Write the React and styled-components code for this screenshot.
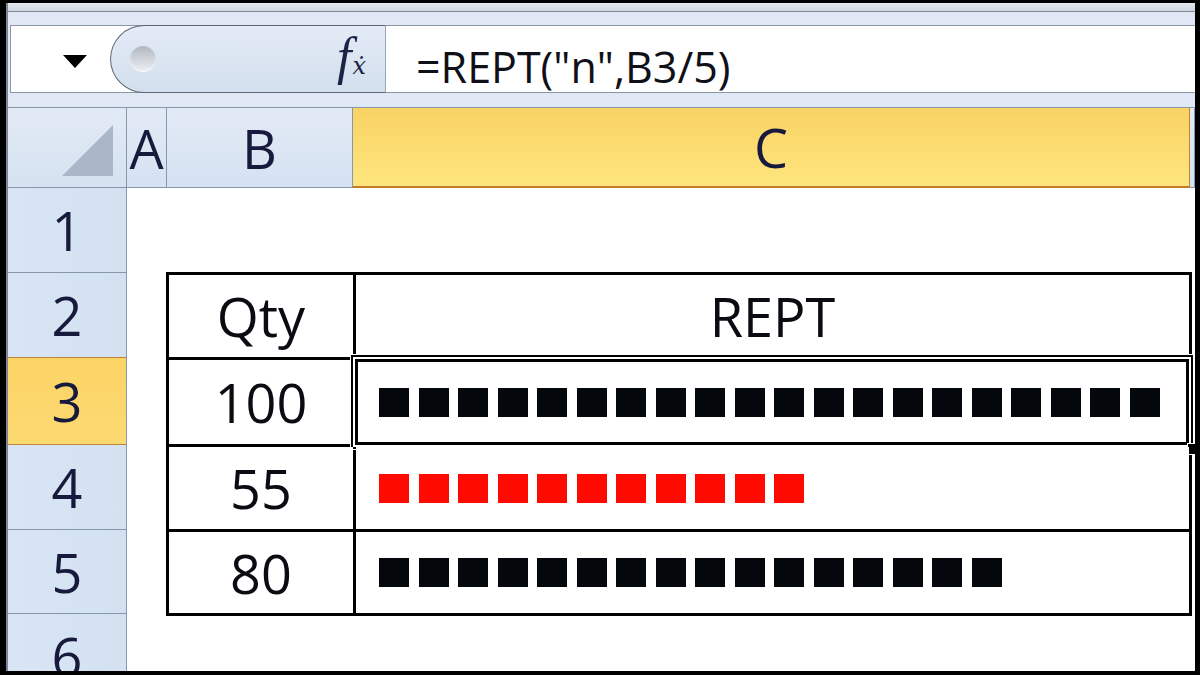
import React from 'react';
import styled, { createGlobalStyle } from 'styled-components';

const GlobalStyle = createGlobalStyle`
  html, body {
    margin: 0;
    background: #000;
  }
  body {
    font-family: "Open Sans", "Liberation Sans", sans-serif;
  }
`;

const Frame = styled.div`
  width: 1200px;
  height: 675px;
  box-sizing: border-box;
  padding: 3px 5px 4px 6px;
  background: #000;
`;

const Screen = styled.div`
  height: 100%;
  display: flex;
  flex-direction: column;
  background: #dfe8f4;
  border-left: 2px solid #7d8796;
  overflow: hidden;
`;

const TopStrip = styled.div`
  flex-shrink: 0;
  height: 8px;
  background: linear-gradient(#e6eaf0, #cfd6df);
  border-bottom: 1px solid #7c8795;
`;

const FormulaRow = styled.div`
  flex-shrink: 0;
  display: flex;
  height: 66px;
  margin: 13px 0 14px 2px;
  background: #fff;
  border-top: 1px solid #8c96a4;
  border-bottom: 1px solid #8c96a4;
  border-left: 1px solid #8c96a4;
`;

const NameBox = styled.div`
  width: 99px;
  flex-shrink: 0;
  display: flex;
  align-items: center;
  padding-left: 52px;
  box-sizing: border-box;
`;

const DropArrow = styled.span`
  width: 0;
  height: 0;
  margin-top: 5px;
  border-left: 12px solid transparent;
  border-right: 12px solid transparent;
  border-top: 13px solid #000;
`;

const FxPanel = styled.div`
  width: 276px;
  flex-shrink: 0;
  box-sizing: border-box;
  margin: -1px 0;
  display: flex;
  align-items: center;
  justify-content: space-between;
  padding: 0 19px 0 19px;
  background: linear-gradient(#e3ebf6, #d3dfee);
  border: 1px solid #5f6773;
  border-right-color: #9aa6b6;
  border-radius: 34px 0 0 34px;
`;

const Knob = styled.span`
  width: 26px;
  height: 26px;
  border-radius: 50%;
  background: linear-gradient(#b1b6bf, #eef1f5);
  box-shadow: inset 0 -1px 2px rgba(255, 255, 255, 0.7);
`;

const FxLabel = styled.span`
  display: flex;
  align-items: baseline;
  color: #1b2444;
  font-style: italic;
  line-height: 1;
  margin-top: -4px;
`;

const FxF = styled.span`
  font-family: "Liberation Serif", "DejaVu Serif", serif;
  font-size: 52px;
`;

const FxX = styled.span`
  font-family: "DejaVu Serif", serif;
  font-size: 24px;
  margin-left: 1px;
`;

const FormulaInput = styled.div`
  flex: 1;
  display: flex;
  align-items: center;
  padding: 14px 0 0 30px;
  box-sizing: border-box;
  font-size: 43px;
  color: #101018;
  white-space: nowrap;
`;

const Sheet = styled.div`
  flex: 1;
  min-height: 0;
  overflow: hidden;
  background: #fff;
  display: grid;
  grid-template-columns: 119px 40px 186px 837px 1fr;
  grid-template-rows: 81px 85px 85px 87px 85px 84px 85px;
`;

const HeaderBase = styled.div`
  box-sizing: border-box;
  display: flex;
  align-items: center;
  justify-content: center;
  font-size: 54px;
  color: #171a3c;
  line-height: 1;
`;

const Corner = styled(HeaderBase)`
  grid-column: 1;
  grid-row: 1;
  align-items: flex-end;
  justify-content: flex-end;
  padding: 0 13px 11px 0;
  background: linear-gradient(#e2eaf5, #d6e2f1);
  border-top: 1px solid #8798ad;
  border-right: 1px solid #8798ad;
  border-bottom: 1px solid #8798ad;
`;

const ColHeader = styled(HeaderBase)`
  grid-row: 1;
  grid-column: ${p => p.$col};
  overflow: visible;
  border-top: 1px solid #8798ad;
  border-right: 1px solid ${p => (p.$active ? '#c0843a' : '#8798ad')};
  border-bottom: ${p => (p.$active ? '2px solid #c47c2c' : '1px solid #8798ad')};
  background: ${p =>
    p.$active
      ? 'linear-gradient(#f9d264, #fee67e)'
      : 'linear-gradient(#e2eaf5, #d5e2f2)'};
`;

const RowHeader = styled(HeaderBase)`
  grid-column: 1;
  grid-row: ${p => p.$row};
  border-right: 1px solid #8798ad;
  border-bottom: 1px solid ${p => (p.$active ? '#c0843a' : '#8798ad')};
  border-top: ${p => (p.$active ? '1px solid #c0843a' : 'none')};
  margin-top: ${p => (p.$active ? '-1px' : '0')};
  background: ${p =>
    p.$active
      ? 'linear-gradient(#fbd465, #fdd972)'
      : 'linear-gradient(90deg, #d9e5f4, #d3e1f1)'};
`;

const DataTable = styled.div`
  grid-column: 3 / 5;
  grid-row: 3 / 7;
  align-self: start;
  margin: -1px -2px 0 -1px;
  display: grid;
  grid-template-columns: 184px 1fr;
  grid-template-rows: 82px 84px 82px 81px;
  gap: 3px;
  padding: 3px;
  background: #000;
  position: relative;
  z-index: 1;
`;

const Cell = styled.div`
  position: relative;
  background: #fff;
  display: flex;
  align-items: center;
  justify-content: ${p => (p.$bars ? 'flex-start' : 'center')};
  padding-left: ${p => (p.$bars ? '23px' : '0')};
  font-size: 54px;
  line-height: 1;
  color: #0b0b12;
`;

const Bars = styled.div`
  display: flex;
  gap: 9.5px;
`;

const Square = styled.span`
  width: 30px;
  height: 29px;
  background: ${p => p.$color};
`;

const Selection = styled.div`
  position: absolute;
  top: -5px;
  left: -5px;
  right: -4px;
  bottom: -5px;
  border: 2px solid #000;
  box-shadow: 0 0 0 1px #fff, inset 0 0 0 2px #fff, inset 0 0 0 5px #000;
  pointer-events: none;
`;

const FillHandle = styled.span`
  position: absolute;
  right: -8px;
  bottom: -8px;
  width: 10px;
  height: 10px;
  background: #000;
  border: 1px solid #fff;
`;

const columns = [
  { label: 'A', col: 2 },
  { label: 'B', col: 3 },
  { label: 'C', col: 4, active: true },
  { label: '', col: 5 },
];

const data = [
  { qty: 100, color: '#04080d', selected: true },
  { qty: 55, color: '#ff0a00' },
  { qty: 80, color: '#04080d' },
];

const App = () => {
  return (
    <Frame>
      <GlobalStyle />
      <Screen>
        <TopStrip />
        <FormulaRow>
          <NameBox>
            <DropArrow />
          </NameBox>
          <FxPanel>
            <Knob />
            <FxLabel>
              <FxF>f</FxF>
              <FxX>ẋ</FxX>
            </FxLabel>
          </FxPanel>
          <FormulaInput>=REPT("n",B3/5)</FormulaInput>
        </FormulaRow>
        <Sheet>
          <Corner>
            <svg width="51" height="51" viewBox="0 0 51 51">
              <polygon points="51,0 51,51 0,51" fill="#aab7c9" />
            </svg>
          </Corner>
          {columns.map(c => (
            <ColHeader key={c.col} $col={c.col} $active={c.active}>
              {c.label}
            </ColHeader>
          ))}
          {[1, 2, 3, 4, 5, 6].map(n => (
            <RowHeader key={n} $row={n + 1} $active={n === 3}>
              {n}
            </RowHeader>
          ))}
          <DataTable>
            <Cell>Qty</Cell>
            <Cell>REPT</Cell>
            {data.map(row => (
              <React.Fragment key={row.qty}>
                <Cell>{row.qty}</Cell>
                <Cell $bars>
                  <Bars>
                    {Array.from({ length: Math.floor(row.qty / 5) }).map((_, i) => (
                      <Square key={i} $color={row.color} />
                    ))}
                  </Bars>
                  {row.selected && (
                    <Selection>
                      <FillHandle />
                    </Selection>
                  )}
                </Cell>
              </React.Fragment>
            ))}
          </DataTable>
        </Sheet>
      </Screen>
    </Frame>
  );
};

export default App;
